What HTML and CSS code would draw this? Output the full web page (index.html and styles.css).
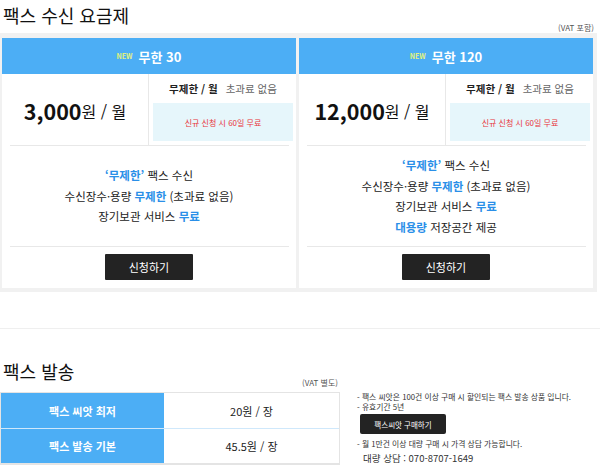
FILE: index.html
```html
<!DOCTYPE html>
<html lang="ko">
<head>
<meta charset="utf-8">
<link rel="stylesheet" href="styles.css">
</head>
<body>
<section class="recv">
  <div class="sec-head">
    <h2 class="sec-title">팩스 수신 요금제</h2>
    <span class="vat">(VAT 포함)</span>
  </div>
  <div class="plans">
    <div class="card">
      <div class="card-head"><span class="new">NEW</span>무한 30</div>
      <div class="card-top">
        <div class="price"><b>3,000</b>원 / 월</div>
        <div class="terms">
          <div class="terms-line"><b>무제한 / 월</b><span class="gray">초과료 없음</span></div>
          <div class="promo">신규 신청 시 60일 무료</div>
        </div>
      </div>
      <div class="hr"></div>
      <div class="features">
        <p><em>‘무제한’</em> 팩스 수신</p>
        <p>수신장수·용량 <em>무제한</em> (초과료 없음)</p>
        <p>장기보관 서비스 <em>무료</em></p>
      </div>
      <div class="hr"></div>
      <div class="card-foot"><button class="btn">신청하기</button></div>
    </div>
    <div class="card">
      <div class="card-head"><span class="new">NEW</span>무한 120</div>
      <div class="card-top">
        <div class="price"><b>12,000</b>원 / 월</div>
        <div class="terms">
          <div class="terms-line"><b>무제한 / 월</b><span class="gray">초과료 없음</span></div>
          <div class="promo">신규 신청 시 60일 무료</div>
        </div>
      </div>
      <div class="hr"></div>
      <div class="features">
        <p><em>‘무제한’</em> 팩스 수신</p>
        <p>수신장수·용량 <em>무제한</em> (초과료 없음)</p>
        <p>장기보관 서비스 <em>무료</em></p>
        <p><em>대용량</em> 저장공간 제공</p>
      </div>
      <div class="hr"></div>
      <div class="card-foot"><button class="btn">신청하기</button></div>
    </div>
  </div>
</section>
<div class="sep"></div>
<section class="send">
  <div class="send-left">
    <div class="sec-head narrow">
      <h2 class="sec-title">팩스 발송</h2>
      <span class="vat">(VAT 별도)</span>
    </div>
    <div class="ptable">
      <div class="prow"><div class="pk">팩스 씨앗 최저</div><div class="pv">20원 / 장</div></div>
      <div class="prow"><div class="pk">팩스 발송 기본</div><div class="pv">45.5원 / 장</div></div>
    </div>
  </div>
  <div class="notes">
    <p>- 팩스 씨앗은 100건 이상 구매 시 할인되는 팩스 발송 상품 입니다.</p>
    <p>- 유효기간 5년</p>
    <button class="btn-sm">팩스씨앗 구매하기</button>
    <p class="n3">- 월 1만건 이상 대량 구매 시 가격 상담 가능합니다.</p>
    <p class="tel">대량 상담 : 070-8707-1649</p>
  </div>
</section>
</body>
</html>
```
FILE: styles.css
```css
* { box-sizing: border-box; }
body {
  margin: 0;
  font-family: "Noto Sans CJK KR", "Noto Sans", sans-serif;
  color: #222;
  background: #fff;
  width: 600px;
}
p { margin: 0; }
.sec-head {
  display: flex;
  justify-content: space-between;
  align-items: flex-end;
  width: 597px;
  padding-left: 3px;
  padding-right: 3px;
}
.sec-title {
  margin: 0;
  font-size: 18px;
  font-weight: 400;
  line-height: 30px;
  padding-bottom: 3px;
  color: #111;
}
.vat {
  font-size: 8px;
  line-height: 10px;
  color: #555;
}
.plans {
  width: 597px;
  background: #f1f1f1;
  padding: 5px 4px 4px 2px;
  display: grid;
  grid-template-columns: 1fr 1fr;
  gap: 3px;
}
.card {
  background: #fff;
  display: flex;
  flex-direction: column;
}
.card-head {
  height: 36px;
  background: #4caef5;
  color: #fff;
  font-size: 13px;
  font-weight: 700;
  display: flex;
  align-items: center;
  justify-content: center;
}
.new {
  font-size: 7px;
  color: #e2f27c;
  font-weight: 700;
  margin-right: 6px;
}
.card-top {
  display: grid;
  grid-template-columns: 1fr 1fr;
  height: 71px;
}
.price {
  display: flex;
  align-items: center;
  justify-content: center;
  font-size: 16px;
  color: #111;
  border-right: 1px solid #e8e8e8;
  padding-top: 2px;
}
.price b {
  font-size: 21.5px;
  font-weight: 700;
}
.terms {
  padding: 7px 3px 4px 4px;
  display: flex;
  flex-direction: column;
}
.terms-line {
  font-size: 10.5px;
  line-height: 16px;
  display: flex;
  justify-content: center;
  gap: 8px;
}
.terms-line b { font-weight: 700; color: #222; }
.gray { color: #666; }
.promo {
  margin-top: 6px;
  height: 38px;
  background: #e6f6fb;
  color: #e8333a;
  font-size: 8px;
  display: flex;
  align-items: center;
  justify-content: center;
}
.hr {
  height: 1px;
  background: #e8e8e8;
  margin: 0 7px 0 8px;
}
.features {
  height: 100px;
  display: flex;
  flex-direction: column;
  justify-content: center;
  align-items: center;
  font-size: 11.5px;
  line-height: 20.5px;
  color: #222;
}
.features em {
  font-style: normal;
  font-weight: 700;
  color: #2a8fe8;
}
.card-foot {
  display: flex;
  justify-content: center;
  padding: 7px 0 8px;
}
.btn {
  width: 88px;
  height: 26px;
  border: 0;
  border-radius: 1px;
  background: #232323;
  color: #fff;
  font-family: inherit;
  font-size: 11px;
}
.sep {
  height: 1px;
  background: #efefef;
  margin-top: 36px;
}
.send {
  display: flex;
  gap: 17px;
}
.send-left { width: 340px; }
.sec-head.narrow {
  width: 340px;
  margin-top: 27px;
  padding-right: 2px;
  margin-bottom: 4px;
}
.sec-head.narrow .sec-title { padding-bottom: 2px; }
.ptable {
  border: 1px solid #e4e4e4;
  border-bottom-width: 2px;
  background: #fff;
}
.prow {
  display: grid;
  grid-template-columns: 163px 1fr;
  height: 35px;
}
.prow + .prow { border-top: 1px solid #cfe8fb; }
.pk {
  background: #4caef5;
  color: #fff;
  font-weight: 700;
  font-size: 11px;
  display: flex;
  align-items: center;
  justify-content: center;
}
.pv {
  font-size: 11px;
  color: #222;
  display: flex;
  align-items: center;
  justify-content: center;
}
.notes {
  padding-top: 63px;
  font-size: 7.8px;
  line-height: 10px;
  color: #333;
}
.btn-sm {
  display: block;
  margin: 2px 0 0 3px;
  width: 86px;
  height: 20px;
  border: 0;
  border-radius: 2px;
  background: #232323;
  color: #fff;
  font-family: inherit;
  font-size: 7.5px;
}
.n3 { margin-top: 5px; }
.tel {
  margin-top: 3px;
  padding-left: 6px;
  font-size: 9.5px;
  line-height: 12px;
}
```
